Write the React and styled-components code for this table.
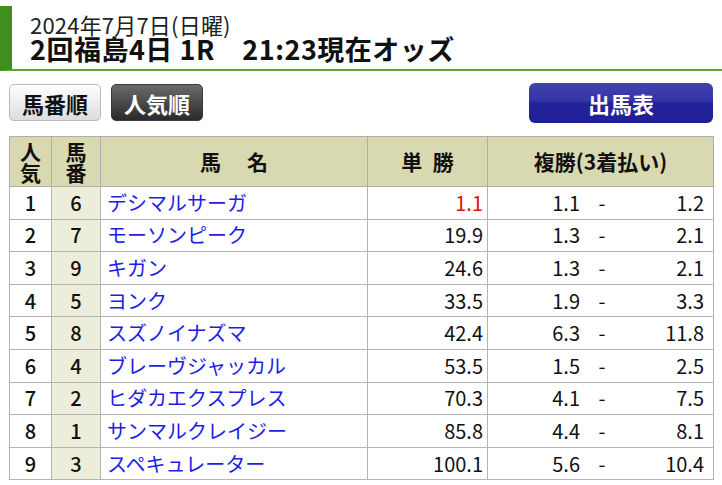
import React from "react";
import styled, { createGlobalStyle } from "styled-components";

const GlobalStyle = createGlobalStyle`
  body {
    margin: 0;
    background: #fff;
    font-family: "Noto Sans CJK JP", "Noto Sans", sans-serif;
    color: #111;
  }
`;

const Page = styled.div`
  width: 722px;
  padding-top: 6px;
`;

const Header = styled.header`
  height: 56px;
  padding: 7px 0 0 18px;
  border-left: 12px solid #3f8f1c;
  border-bottom: 2px solid #5ba62c;
  display: flex;
  flex-direction: column;
`;

const DateLine = styled.div`
  font-size: 22px;
  line-height: 22px;
  color: #222;
  letter-spacing: 0.2px;
`;

const Title = styled.h1`
  margin: 0;
  font-size: 27px;
  line-height: 28px;
  font-weight: 700;
  letter-spacing: 0.5px;
  color: #111;
  white-space: pre;
`;

const Toolbar = styled.div`
  display: flex;
  justify-content: space-between;
  align-items: flex-start;
  padding: 12px 9px 0 9px;
`;

const SortGroup = styled.div`
  display: flex;
  gap: 10px;
  padding-top: 1px;
`;

const SortButton = styled.button`
  width: 92px;
  height: 37px;
  border-radius: 5px;
  font-family: inherit;
  font-size: 22px;
  line-height: 1;
  font-weight: 700;
  padding: 0;
  border: 1px solid ${(p) => (p.$active ? "#3a3a3a" : "#b9b9b9")};
  color: ${(p) => (p.$active ? "#fff" : "#111")};
  background: ${(p) =>
    p.$active
      ? "linear-gradient(#6a6a6a, #2a2a2a)"
      : "linear-gradient(#ffffff, #dcdcdc)"};
`;

const EntryButton = styled.button`
  width: 184px;
  height: 40px;
  border-radius: 6px;
  border: none;
  font-family: inherit;
  font-size: 22px;
  line-height: 1;
  font-weight: 700;
  color: #fff;
  padding: 0;
  background: linear-gradient(#4242ae 0%, #3434a6 45%, #23239a 50%, #1f1f96 100%);
`;

const Table = styled.table`
  margin: 13px 0 0 9px;
  width: 704px;
  border-collapse: collapse;
  table-layout: fixed;
`;

const Th = styled.th`
  background: #d9d9b1;
  border: 1px solid #aeaeae;
  font-size: 21px;
  font-weight: 700;
  line-height: 21px;
  height: 49px;
  padding: 0;
  text-align: center;
  color: #111;
  white-space: pre;
`;

const Tr = styled.tr`
  height: 32.6px;
`;

const Td = styled.td`
  border: 1px solid #b4b4b4;
  font-size: 20px;
  line-height: 24px;
  font-weight: ${(p) => (p.$strong ? 500 : 400)};
  padding: 0 ${(p) => (p.$align === "right" ? "4px" : "6px")};
  text-align: ${(p) => p.$align || "center"};
  background: ${(p) => (p.$shade ? "#ededdc" : "#fff")};
  color: ${(p) => p.$color || "#111"};
  white-space: nowrap;
`;

const PlaceCell = styled.div`
  display: grid;
  grid-template-columns: 92px 42px 1fr;
  padding-right: 9px;
`;

const PlaceLow = styled.span`
  text-align: right;
`;

const Dash = styled.span`
  text-align: center;
  padding-left: 2px;
`;

const PlaceHigh = styled.span`
  text-align: right;
`;

const rows = [
  [1, 6, "デシマルサーガ", "1.1", "1.1", "1.2"],
  [2, 7, "モーソンピーク", "19.9", "1.3", "2.1"],
  [3, 9, "キガン", "24.6", "1.3", "2.1"],
  [4, 5, "ヨンク", "33.5", "1.9", "3.3"],
  [5, 8, "スズノイナズマ", "42.4", "6.3", "11.8"],
  [6, 4, "ブレーヴジャッカル", "53.5", "1.5", "2.5"],
  [7, 2, "ヒダカエクスプレス", "70.3", "4.1", "7.5"],
  [8, 1, "サンマルクレイジー", "85.8", "4.4", "8.1"],
  [9, 3, "スペキュレーター", "100.1", "5.6", "10.4"],
];

export default function App() {
  return (
    <Page>
      <GlobalStyle />
      <Header>
        <DateLine>2024年7月7日(日曜)</DateLine>
        <Title>{"2回福島4日 1R　21:23現在オッズ"}</Title>
      </Header>
      <Toolbar>
        <SortGroup>
          <SortButton>馬番順</SortButton>
          <SortButton $active>人気順</SortButton>
        </SortGroup>
        <EntryButton>出馬表</EntryButton>
      </Toolbar>
      <Table>
        <colgroup>
          <col style={{ width: 42 }} />
          <col style={{ width: 49 }} />
          <col style={{ width: 267 }} />
          <col style={{ width: 120 }} />
          <col style={{ width: 226 }} />
        </colgroup>
        <thead>
          <tr>
            <Th>{"人\n気"}</Th>
            <Th>{"馬\n番"}</Th>
            <Th>{"馬　 名"}</Th>
            <Th>{"単\u2002勝"}</Th>
            <Th>複勝(3着払い)</Th>
          </tr>
        </thead>
        <tbody>
          {rows.map(([rank, num, name, win, lo, hi]) => (
            <Tr key={rank}>
              <Td $strong>{rank}</Td>
              <Td $strong $shade>{num}</Td>
              <Td $align="left" $color="#1d1de6">{name}</Td>
              <Td $align="right" $color={rank === 1 ? "#e01010" : "#111"}>{win}</Td>
              <Td $align="left" style={{ padding: 0 }}>
                <PlaceCell>
                  <PlaceLow>{lo}</PlaceLow>
                  <Dash>-</Dash>
                  <PlaceHigh>{hi}</PlaceHigh>
                </PlaceCell>
              </Td>
            </Tr>
          ))}
        </tbody>
      </Table>
    </Page>
  );
}
